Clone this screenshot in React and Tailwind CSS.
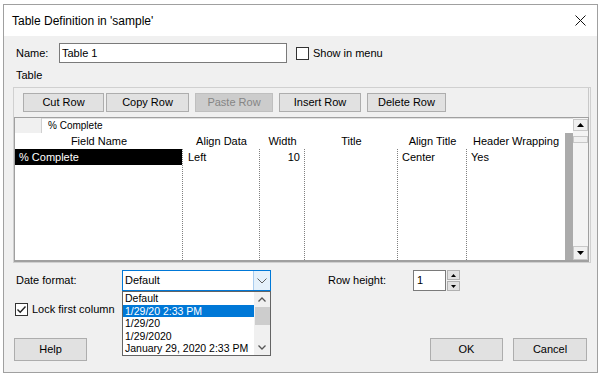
const btn = "h-[19px] bg-[#e1e1e1] border border-[#adadad] flex items-center justify-center text-[11px] text-black";

function Check({ checked }) {
  return (
    <div className="w-[13px] h-[13px] border border-[#333333] bg-white flex items-center justify-center">
      {checked && (
        <svg width="11" height="11" viewBox="0 0 11 11">
          <path d="M1.5 5.5 L4.2 8.2 L9.5 2.5" fill="none" stroke="#222" strokeWidth="1.4" />
        </svg>
      )}
    </div>
  );
}

const cols = [
  { w: "w-[168px]", title: "Field Name", val: "% Complete", sel: true },
  { w: "w-[77px]", title: "Align Data", val: "Left", align: "pl-[5px]" },
  { w: "w-[45px]", title: "Width", val: "10", align: "text-right pr-[4px]" },
  { w: "w-[93px]", title: "Title", val: "" },
  { w: "w-[69px]", title: "Align Title", val: "Center", align: "pl-[4px]" },
  { w: "w-[98px]", title: "Header Wrapping", val: "Yes", align: "pl-[4px]", last: true },
];

export default function App() {
  return (
    <div className="w-[600px] h-[375px] bg-white pt-[4px] pl-[3px] font-['Liberation_Sans',Arial,sans-serif] text-[11px] text-black leading-none">
      <div className="w-[595px] h-[369px] border border-[#a0a0a0] flex flex-col bg-[#f0f0f0]">
        {/* title bar */}
        <div className="h-[31px] bg-white flex items-center justify-between pl-[8px] pr-[11px] text-[12px] shrink-0">
          <span>Table Definition in 'sample'</span>
          <svg width="11" height="11" viewBox="0 0 11 11">
            <path d="M0.5 0.5 L10.5 10.5 M10.5 0.5 L0.5 10.5" stroke="#111" strokeWidth="1" fill="none" />
          </svg>
        </div>
        {/* body */}
        <div className="relative flex-1 flex flex-col pl-[9px]">
          {/* name row */}
          <div className="mt-[7px] h-[20px] flex items-center">
            <div className="w-[46px] pl-[3px]">Name:</div>
            <div className="w-[228px] h-[20px] border border-[#7a7a7a] bg-white flex items-center pl-[2px]">Table 1</div>
            <div className="ml-[9px]"><Check /></div>
            <span className="ml-[4px]">Show in menu</span>
          </div>
          <div className="mt-[6px] h-[13px] leading-[13px] pl-[3px]">Table</div>
          {/* group */}
          <div className="mt-[5px] w-[578px] h-[176px] border border-[#d0d0d0] flex flex-col">
            <div className="h-[29px] w-[575px] border-r border-[#c8c8c8] flex items-start pt-[5px] pl-[9px]">
              <div className={`${btn} w-[81px]`}>Cut Row</div>
              <div className={`${btn} w-[83px] ml-[2px]`}>Copy Row</div>
              <div className="h-[19px] w-[78px] ml-[6px] bg-[#cccccc] border border-[#bfbfbf] flex items-center justify-center text-[#858585]">Paste Row</div>
              <div className={`${btn} w-[82px] ml-[6px]`}>Insert Row</div>
              <div className={`${btn} w-[79px] ml-[6px]`}>Delete Row</div>
            </div>
            {/* grid */}
            <div className="w-[575px] h-[145px] border-t border-l border-r border-b-2 border-[#a0a0a0] flex">
              <div className="w-[558px] flex flex-col">
                <div className="h-[15px] flex shrink-0">
                  <div className="w-[27px] bg-[#f0f0f0] border-r border-[#d0d0d0]"></div>
                  <div className="flex-1 bg-white border-t border-[#e0e0e0] flex items-center pl-[6px] text-[10px]">% Complete</div>
                </div>
                <div className="flex flex-1">
                  <div className="w-[550px] bg-white flex">
                    {cols.map((c, i) => (
                      <div key={i} className={`${c.w} flex flex-col`}>
                        <div className="h-[16px] flex items-center justify-center">{c.title}</div>
                        <div className={`flex-1 ${c.last ? "" : "border-r border-dotted border-[#808080]"}`}>
                          {c.sel ? (
                            <div className="h-[16px] bg-black text-white flex items-center pl-[4px]">{c.val}</div>
                          ) : (
                            <div className={`h-[16px] leading-[16px] ${c.align || ""}`}>{c.val}</div>
                          )}
                        </div>
                      </div>
                    ))}
                  </div>
                  <div className="w-[8px] bg-[#ababab]"></div>
                </div>
              </div>
              {/* scrollbar */}
              <div className="w-[15px] bg-[#f4f4f4] flex flex-col items-center pt-[1px] pb-[0px]">
                <div className="w-[15px] h-[12px] border border-[#c8c8c8] bg-[#f0f0f0] flex items-center justify-center">
                  <svg width="7" height="4" viewBox="0 0 7 4"><path d="M0 4 L3.5 0 L7 4 Z" fill="#000" /></svg>
                </div>
                <div className="mt-[5px] w-[15px] h-[7px] border border-[#c8c8c8] bg-[#f0f0f0]"></div>
                <div className="flex-1"></div>
                <div className="w-[15px] h-[14px] border border-[#c8c8c8] bg-[#f0f0f0] flex items-center justify-center">
                  <svg width="7" height="4" viewBox="0 0 7 4"><path d="M0 0 L3.5 4 L7 0 Z" fill="#000" /></svg>
                </div>
              </div>
            </div>
          </div>
          {/* date format row */}
          <div className="mt-[7px] h-[21px] flex items-center">
            <div className="w-[109px] pl-[3px]">Date format:</div>
            <div className="w-[149px] h-[21px] border border-[#0078d7] bg-white flex">
              <div className="flex-1 flex items-center pl-[2px]">Default</div>
              <div className="w-[17px] bg-[#e5f1fb] border-l border-[#a9cdef] flex items-center justify-center">
                <svg width="10" height="6" viewBox="0 0 10 6"><path d="M0.5 0.5 L5 5 L9.5 0.5" fill="none" stroke="#606060" strokeWidth="1" /></svg>
              </div>
            </div>
            <div className="ml-[57px] w-[85px]">Row height:</div>
            <div className="w-[33px] h-[21px] border border-[#7a7a7a] bg-white pl-[3px] pt-[4px]">1</div>
            <div className="ml-[1px] w-[13px] h-[21px] flex flex-col gap-[1px]">
              <div className="flex-1 bg-[#e1e1e1] border border-[#b0b0b0] flex items-center justify-center">
                <svg width="5" height="3" viewBox="0 0 5 3"><path d="M0 3 L2.5 0 L5 3 Z" fill="#000" /></svg>
              </div>
              <div className="flex-1 bg-[#e1e1e1] border border-[#b0b0b0] flex items-center justify-center">
                <svg width="5" height="3" viewBox="0 0 5 3"><path d="M0 0 L2.5 3 L5 0 Z" fill="#000" /></svg>
              </div>
            </div>
          </div>
          {/* lock first column */}
          <div className="mt-[11px] h-[14px] flex items-center pl-[2px]">
            <Check checked />
            <span className="ml-[4px]">Lock first column</span>
          </div>
          {/* buttons */}
          <div className="mt-[22px] h-[23px] flex pl-[1px]">
            <div className="w-[73px] h-[23px] bg-[#e1e1e1] border border-[#adadad] flex items-center justify-center">Help</div>
            <div className="flex-1"></div>
            <div className="w-[73px] h-[23px] bg-[#e1e1e1] border border-[#adadad] flex items-center justify-center">OK</div>
            <div className="ml-[10px] mr-[10px] w-[74px] h-[23px] bg-[#e1e1e1] border border-[#adadad] flex items-center justify-center">Cancel</div>
          </div>
          {/* dropdown popup */}
          <div className="absolute left-[118px] top-[255px] w-[149px] h-[65px] border border-[#646464] bg-white flex text-[10.5px]">
            <div className="flex-1 flex flex-col">
              {["Default", "1/29/20 2:33 PM", "1/29/20", "1/29/2020", "January 29, 2020 2:33 PM"].map((t, i) => (
                <div key={i} className={`h-[12.6px] flex items-center pl-[2px] whitespace-nowrap ${i === 1 ? "bg-[#0078d7] text-white" : ""}`}>{t}</div>
              ))}
            </div>
            <div className="w-[16px] bg-[#f0f0f0] flex flex-col items-center">
              <div className="h-[15px] flex items-center justify-center">
                <svg width="8" height="5" viewBox="0 0 8 5"><path d="M0.5 4.5 L4 1 L7.5 4.5" fill="none" stroke="#555" strokeWidth="1.3" /></svg>
              </div>
              <div className="w-[15px] h-[18px] bg-[#cdcdcd]"></div>
              <div className="flex-1"></div>
              <div className="h-[15px] flex items-center justify-center">
                <svg width="8" height="5" viewBox="0 0 8 5"><path d="M0.5 0.5 L4 4 L7.5 0.5" fill="none" stroke="#555" strokeWidth="1.3" /></svg>
              </div>
            </div>
          </div>
        </div>
      </div>
    </div>
  );
}
